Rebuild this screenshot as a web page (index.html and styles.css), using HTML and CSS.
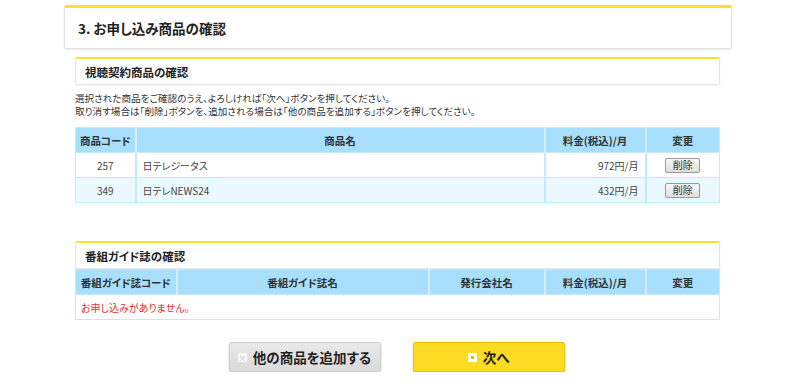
FILE: index.html
```html
<!DOCTYPE html>
<html>
<head>
<meta charset="utf-8">
<link rel="stylesheet" href="styles.css">
</head>
<body>

<div class="page">
  <div class="step-head">
    <h1>3. お申し込み商品の確認</h1>
  </div>

  <div class="content">
    <div class="sec-head"><h2>視聴契約商品の確認</h2></div>
    <p class="note">選択された商品をご確認のうえ、よろしければ「次へ」ボタンを押してください。</p>
    <p class="note last">取り消す場合は「削除」ボタンを、追加される場合は「他の商品を追加する」ボタンを押してください。</p>

    <table class="list">
      <colgroup>
        <col style="width:60px">
        <col>
        <col style="width:101px">
        <col style="width:74px">
      </colgroup>
      <tr>
        <th>商品コード</th>
        <th>商品名</th>
        <th>料金(税込)/月</th>
        <th>変更</th>
      </tr>
      <tr>
        <td class="c">257</td>
        <td>日テレジータス</td>
        <td class="r">972円/月</td>
        <td class="c"><button class="del">削除</button></td>
      </tr>
      <tr class="alt">
        <td class="c">349</td>
        <td>日テレNEWS24</td>
        <td class="r">432円/月</td>
        <td class="c"><button class="del">削除</button></td>
      </tr>
    </table>

    <div class="sec-head second"><h2>番組ガイド誌の確認</h2></div>

    <table class="list guide">
      <colgroup>
        <col style="width:101px">
        <col>
        <col style="width:116px">
        <col style="width:101px">
        <col style="width:74px">
      </colgroup>
      <tr>
        <th>番組ガイド誌コード</th>
        <th>番組ガイド誌名</th>
        <th>発行会社名</th>
        <th>料金(税込)/月</th>
        <th>変更</th>
      </tr>
      <tr>
        <td colspan="5" class="empty">お申し込みがありません。</td>
      </tr>
    </table>

    <div class="actions">
      <a class="btn gray" href="#"><span class="ico-x">×</span>他の商品を追加する</a>
      <a class="btn yellow" href="#"><span class="ico-dot"></span>次へ</a>
    </div>
  </div>
</div>

</body>
</html>
```

FILE: styles.css
```css
body {
  margin: 0;
  padding: 0;
  background: #fff;
  font-family: "Noto Sans CJK JP", "Liberation Sans", sans-serif;
  color: #333;
}
.page {
  width: 668px;
  margin: 5px 0 0 64px;
}
.step-head {
  border: 1px solid #e2e2e2;
  border-top: 3px solid #fde02b;
  border-radius: 2px;
  box-shadow: 0 1px 2px rgba(0, 0, 0, 0.08);
  height: 40px;
  display: flex;
  align-items: center;
}
.step-head h1 {
  margin: 0 0 0 13px;
  font-size: 13.5px;
  font-weight: bold;
  color: #222;
  font-feature-settings: "palt";
}
.content {
  padding: 8px 12px 0 11px;
}
.sec-head {
  border: 1px solid #e4e4e4;
  border-top: 2px solid #fde02b;
  border-radius: 2px;
  box-shadow: 0 1px 2px rgba(0, 0, 0, 0.06);
  height: 25px;
  display: flex;
  align-items: center;
}
.sec-head.second {
  margin-top: 38px;
}
.sec-head h2 {
  margin: 0 0 0 9px;
  font-size: 11.5px;
  font-weight: bold;
  color: #222;
  font-feature-settings: "palt";
}
.note {
  margin: 7px 0 0 0;
  font-size: 9.6px;
  line-height: 12px;
  height: 12px;
  color: #333;
  font-feature-settings: "palt";
}
.note.last {
  margin: 1px 0 10px 0;
}
.list {
  width: 100%;
  border-collapse: collapse;
  table-layout: fixed;
  font-size: 10px;
  border: 1px solid #c6e9fa;
}
.list th {
  background: #a7dffc;
  height: 24px;
  padding: 0;
  font-size: 10.5px;
  font-weight: bold;
  color: #333;
  border-left: 2px solid #d4f0fd;
  font-feature-settings: "palt";
}
.list th:first-child {
  border-left: none;
}
.list td {
  height: 24px;
  padding: 0 6px;
  border-top: 1px solid #c6e9fa;
  border-left: 2px solid #c6e9fa;
  color: #444;
  font-feature-settings: "palt";
}
.list td:first-child {
  border-left: none;
}
.list tr.alt td {
  background: #ebf8fe;
}
.list td.c {
  text-align: center;
}
.list td.r {
  text-align: right;
}
.list .del {
  font-family: inherit;
  font-size: 10px;
  color: #333;
  height: 15px;
  width: 35px;
  padding: 0;
  line-height: 12px;
  border: 1px solid #9a9a9a;
  border-radius: 2px;
  background: linear-gradient(#fafafa, #dedede);
}
.list td.empty {
  color: #e8302a;
  padding-left: 5px;
}
.actions {
  display: flex;
  justify-content: center;
  gap: 32px;
  margin-top: 22px;
  padding-right: 2px;
}
.btn {
  width: 150px;
  height: 28px;
  display: flex;
  align-items: center;
  justify-content: center;
  gap: 6px;
  text-decoration: none;
  font-size: 13.5px;
  font-weight: bold;
  color: #222;
  border-radius: 2px;
  font-feature-settings: "palt";
}
.btn.gray {
  background: linear-gradient(#e9e9e9, #dadada);
  border: 1px solid #cfcfcf;
  box-shadow: 0 2px 2px rgba(0, 0, 0, 0.25);
}
.btn.yellow {
  background: #fddb22;
  border: 1px solid #eac300;
  box-shadow: 0 2px 2px rgba(150, 110, 0, 0.35);
}
.ico-x {
  width: 9px;
  height: 9px;
  background: #fafafa;
  color: #bbb;
  font-size: 8px;
  line-height: 9px;
  text-align: center;
  font-weight: normal;
}
.ico-dot {
  width: 9px;
  height: 9px;
  background: #fff;
  position: relative;
}
.ico-dot::after {
  content: "";
  position: absolute;
  left: 3px;
  top: 3px;
  width: 3px;
  height: 3px;
  background: #e6b800;
}
```
